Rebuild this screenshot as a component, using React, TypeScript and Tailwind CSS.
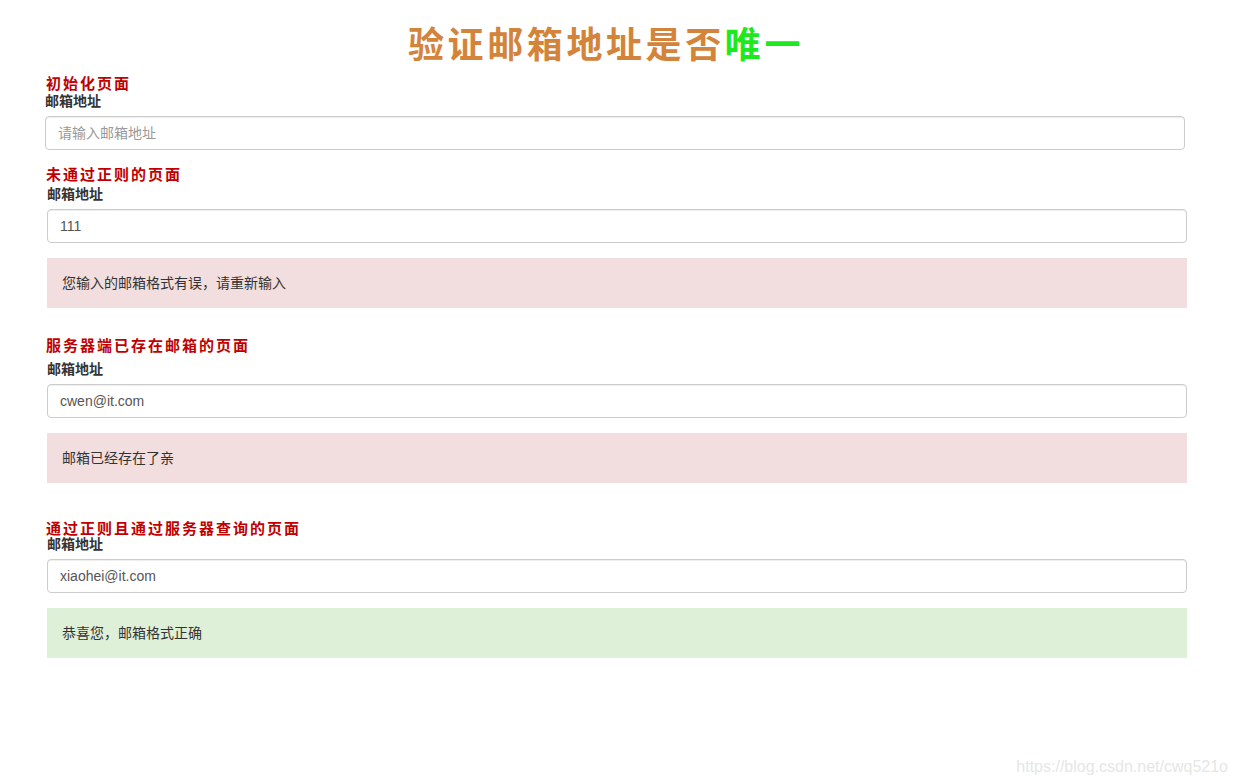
import React from "react";

const font = "font-['Liberation_Sans','Noto_Sans_CJK_SC',sans-serif]";

type SectionProps = {
  title: string;
  value?: string;
  alert?: { text: string; ok?: boolean };
  className?: string;
  titleClass?: string;
  labelClass?: string;
};

const Section: React.FC<SectionProps> = ({
  title,
  value,
  alert,
  className,
  titleClass,
  labelClass,
}) => (
  <div className={`w-[1140px] ${className ?? ""}`}>
    <h3
      className={`text-[15px] leading-[18px] font-bold tracking-[2px] text-[#c00000] ${titleClass ?? ""}`}
    >
      {title}
    </h3>
    <label className={`block text-[14px] leading-[18px] font-bold text-[#333] ${labelClass ?? ""}`}>
      邮箱地址
    </label>
    <input
      readOnly
      value={value ?? ""}
      placeholder="请输入邮箱地址"
      className="mt-[6px] block w-full h-[34px] px-3 border border-[#ccc] rounded-[4px] text-[14px] text-[#555] placeholder:text-[#999] outline-none shadow-[inset_0_1px_1px_rgba(0,0,0,0.075)]"
    />
    {alert && (
      <div
        className={`mt-[15px] h-[50px] flex items-center px-[15px] text-[14px] text-[#333] ${
          alert.ok ? "bg-[#dff0d8]" : "bg-[#f2dede]"
        }`}
      >
        {alert.text}
      </div>
    )}
  </div>
);

export default function App() {
  return (
    <div className={`relative h-[784px] bg-white ${font}`}>
      <div className="pt-[22px]">
        <h1 className="pr-[24px] text-center text-[36px] leading-[48px] font-bold tracking-[3.6px] text-[#d4843a]">
          验证邮箱地址是否<span className="text-[#1ee81e]">唯一</span>
        </h1>
        <Section
          title="初始化页面"
          className="ml-[45px] mt-[5px]"
          titleClass="ml-px"
          labelClass="-mt-px"
        />
        <Section
          title="未通过正则的页面"
          value="111"
          alert={{ text: "您输入的邮箱格式有误，请重新输入" }}
          className="ml-[47px] mt-[16px]"
          titleClass="-ml-px"
          labelClass="mt-px"
        />
        <Section
          title="服务器端已存在邮箱的页面"
          value="cwen@it.com"
          alert={{ text: "邮箱已经存在了亲" }}
          className="ml-[47px] mt-[29px]"
          titleClass="-ml-px"
          labelClass="mt-[5px]"
        />
        <Section
          title="通过正则且通过服务器查询的页面"
          value="xiaohei@it.com"
          alert={{ text: "恭喜您，邮箱格式正确", ok: true }}
          className="ml-[47px] mt-[37px]"
          titleClass="-ml-px"
          labelClass="-mt-[3px]"
        />
      </div>
      <span className="absolute right-[8px] bottom-[5px] text-[16px] text-[#e6e6e6]">
        https://blog.csdn.net/cwq521o
      </span>
    </div>
  );
}
